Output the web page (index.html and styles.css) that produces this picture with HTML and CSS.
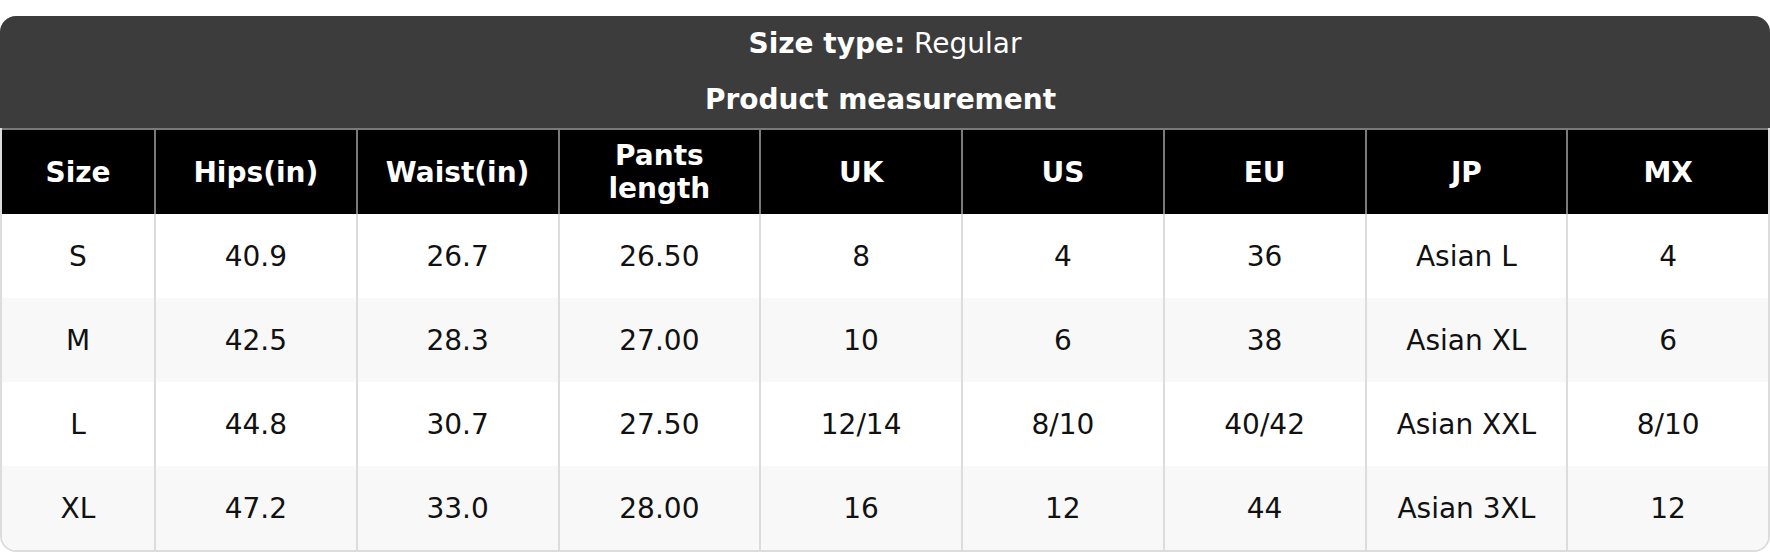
FILE: index.html
```html
<!DOCTYPE html>
<html>
<head>
<meta charset="utf-8">
<link rel="stylesheet" href="styles.css">
</head>
<body>
<div class="card">
  <div class="head">
    <div class="head-line"><b>Size type:</b> Regular</div>
    <div class="head-line head-sub"><b>Product measurement</b></div>
  </div>
  <table class="sizes">
    <colgroup>
      <col class="c-first">
      <col><col><col><col><col><col><col><col>
    </colgroup>
    <thead>
      <tr>
        <th>Size</th><th>Hips(in)</th><th>Waist(in)</th><th>Pants<br>length</th><th>UK</th><th>US</th><th>EU</th><th>JP</th><th>MX</th>
      </tr>
    </thead>
    <tbody>
      <tr><td>S</td><td>40.9</td><td>26.7</td><td>26.50</td><td>8</td><td>4</td><td>36</td><td>Asian L</td><td>4</td></tr>
      <tr><td>M</td><td>42.5</td><td>28.3</td><td>27.00</td><td>10</td><td>6</td><td>38</td><td>Asian XL</td><td>6</td></tr>
      <tr><td>L</td><td>44.8</td><td>30.7</td><td>27.50</td><td>12/14</td><td>8/10</td><td>40/42</td><td>Asian XXL</td><td>8/10</td></tr>
      <tr><td>XL</td><td>47.2</td><td>33.0</td><td>28.00</td><td>16</td><td>12</td><td>44</td><td>Asian 3XL</td><td>12</td></tr>
    </tbody>
  </table>
</div>
</body>
</html>
```
FILE: styles.css
```css
html, body {
  margin: 0;
  padding: 0;
  background: #ffffff;
}
body {
  padding-top: 16px;
  font-family: "DejaVu Sans", Verdana, sans-serif;
  font-size: 28px;
  color: #111111;
}
.card {
  box-sizing: border-box;
  width: 1770px;
  border: 2px solid #dcdcdc;
  border-top: none;
  border-radius: 16px;
  background: #ffffff;
}
.head {
  margin: 0 -2px;
  background: #3c3c3c;
  color: #ffffff;
  border-radius: 16px 16px 0 0;
  text-align: center;
}
.head-line {
  height: 56px;
  line-height: 56px;
}
.head-sub {
  padding-right: 9px;
}
.sizes {
  width: 100%;
  table-layout: fixed;
  border-collapse: separate;
  border-spacing: 0;
}
.c-first {
  width: 152px;
}
.sizes th {
  background: #000000;
  color: #ffffff;
  font-weight: bold;
  height: 84px;
  padding: 0;
  line-height: 33px;
  border-top: 2px solid #7a7a7a;
  text-align: center;
  vertical-align: middle;
}
.sizes th + th {
  border-left: 2px solid #7a7a7a;
}
.sizes td {
  height: 84px;
  padding: 0;
  text-align: center;
  vertical-align: middle;
  line-height: 33px;
  color: #111111;
}
.sizes td + td {
  border-left: 2px solid #dcdcdc;
}
.sizes tbody tr:nth-child(even) td {
  background: #f8f8f8;
}
.sizes tbody tr:last-child td:first-child {
  border-bottom-left-radius: 14px;
}
.sizes tbody tr:last-child td:last-child {
  border-bottom-right-radius: 14px;
}
```
